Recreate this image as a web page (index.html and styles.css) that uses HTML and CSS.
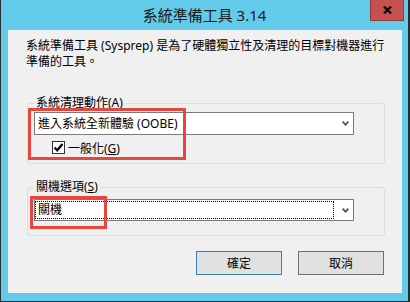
FILE: index.html
```html
<!DOCTYPE html>
<html lang="zh-Hant">
<head>
  <meta charset="UTF-8">
  <title>系統準備工具 3.14</title>
  <link rel="stylesheet" href="styles.css">
</head>
<body>
  <div class="window">
    <div class="titlebar">
      <span></span>
      <span class="title">系統準備工具 3.14</span>
      <span class="close">
        <svg width="9" height="8" viewBox="0 0 9 8">
          <path d="M1 0.5 L8 7.5 M8 0.5 L1 7.5" stroke="#000" stroke-width="2.2" fill="none"/>
        </svg>
      </span>
    </div>

    <div class="client">
      <p class="desc">系統準備工具 (Sysprep) 是為了硬體獨立性及清理的目標對機器進行<br>準備的工具。</p>

      <fieldset class="group group-cleanup">
        <legend>系統清理動作(A)</legend>
        <div class="combo combo-cleanup">
          <span class="combo-text">進入系統全新體驗 (OOBE)</span>
          <svg class="arrow" width="7" height="5" viewBox="0 0 7 5">
            <path d="M0.7 0.7 L3.5 3.8 L6.3 0.7" stroke="#555" stroke-width="1.8" fill="none"/>
          </svg>
        </div>
        <label class="check">
          <span class="box">
            <svg width="11" height="11" viewBox="0 0 11 11">
              <path d="M1.5 5.5 L4.2 8.3 L9.5 2" stroke="#000" stroke-width="2.2" fill="none"/>
            </svg>
          </span>
          <span>一般化(<u>G</u>)</span>
        </label>
      </fieldset>

      <fieldset class="group group-shutdown">
        <legend>關機選項(<u>S</u>)</legend>
        <div class="combo combo-shutdown">
          <span class="combo-text focus">關機</span>
          <svg class="arrow" width="7" height="5" viewBox="0 0 7 5">
            <path d="M0.7 0.7 L3.5 3.8 L6.3 0.7" stroke="#555" stroke-width="1.8" fill="none"/>
          </svg>
        </div>
      </fieldset>

      <div class="buttons">
        <button class="btn btn-default">確定</button>
        <button class="btn">取消</button>
      </div>

      <div class="mark mark-cleanup"></div>
      <div class="mark mark-shutdown"></div>
    </div>
  </div>
</body>
</html>
```

FILE: styles.css
```css
* {
  box-sizing: border-box;
}
body {
  margin: 0;
  font-family: "Noto Sans", "Noto Sans CJK TC", sans-serif;
  font-size: 12px;
  color: #000;
}
.window {
  width: 410px;
  height: 302px;
  background-color: #64caea; /* title / frame cyan */
  border-left: 1px solid #2b2b2b;
  border-right: 2px solid #2b2b2b;
  border-bottom: 1px solid #2b2b2b;
  display: flex;
  flex-direction: column;
}
.titlebar {
  height: 30px;
  display: grid;
  grid-template-columns: 1fr auto 1fr;
}
.title {
  align-self: center;
  font-size: 15px;
  line-height: 18px;
  color: #1a1a1a;
  padding-bottom: 1px;
}
.close {
  justify-self: end;
  width: 34px;
  height: 21px;
  margin-right: 4px;
  background-color: #c75050;
  border: 1px solid #8e3b3b;
  border-top: none;
  display: flex;
  align-items: center;
  justify-content: center;
}
.client {
  flex: 1;
  margin: 0 6px 8px 7px;
  background-color: #f0f0f0;
  position: relative;
}
.desc {
  margin: 0;
  padding: 8px 0 0 18px;
  line-height: 16px;
  white-space: nowrap;
}
.group {
  margin: 0 17px 0 19px;
  padding: 1px 6px 9px 6px;
  border: 1px solid #d5dfe5;
  border-radius: 3px;
  min-width: 0;
}
.group legend {
  padding: 0 2px;
  line-height: 16px;
}
.group-cleanup {
  margin-top: 25px;
}
.group-shutdown {
  margin-top: 15px;
  padding-top: 4px;
  padding-bottom: 14px;
}
.combo {
  width: 320px;
  height: 23px;
  background-color: #fff;
  border: 1px solid #7a7a7a;
  display: flex;
  align-items: center;
  padding-right: 4px;
}
.combo-shutdown {
  height: 22px;
}
.combo-text {
  flex: 1;
  padding-left: 3px;
  line-height: 16px;
}
.combo-text.focus {
  align-self: stretch;
  margin: 1px 8px 1px 0;
  padding-left: 2px;
  border: 1px dotted #000;
  display: flex;
  align-items: center;
}
.arrow {
  display: block;
}
.check {
  display: flex;
  align-items: center;
  gap: 3px;
  height: 13px;
  margin: 6px 0 0 18px;
}
.box {
  width: 13px;
  height: 13px;
  border: 1px solid #333;
  background-color: #fff;
  display: flex;
  align-items: center;
  justify-content: center;
}
.box svg {
  display: block;
}
.buttons {
  display: flex;
  justify-content: flex-end;
  gap: 16px;
  margin-top: 15px;
  padding-right: 18px;
}
.btn {
  width: 86px;
  height: 24px;
  font-family: inherit;
  font-size: 12px;
  background-color: #e1e1e1;
  border: 1px solid #707070;
  padding: 0;
  color: #000;
}
.btn-default {
  border-color: #3c7fb1;
}
.mark {
  position: absolute;
  border: 3px solid #e8453f;
}
.mark-cleanup {
  left: 20px;
  top: 78px;
  width: 158px;
  height: 52px;
}
.mark-shutdown {
  left: 22px;
  top: 166px;
  width: 77px;
  height: 33px;
}
```
